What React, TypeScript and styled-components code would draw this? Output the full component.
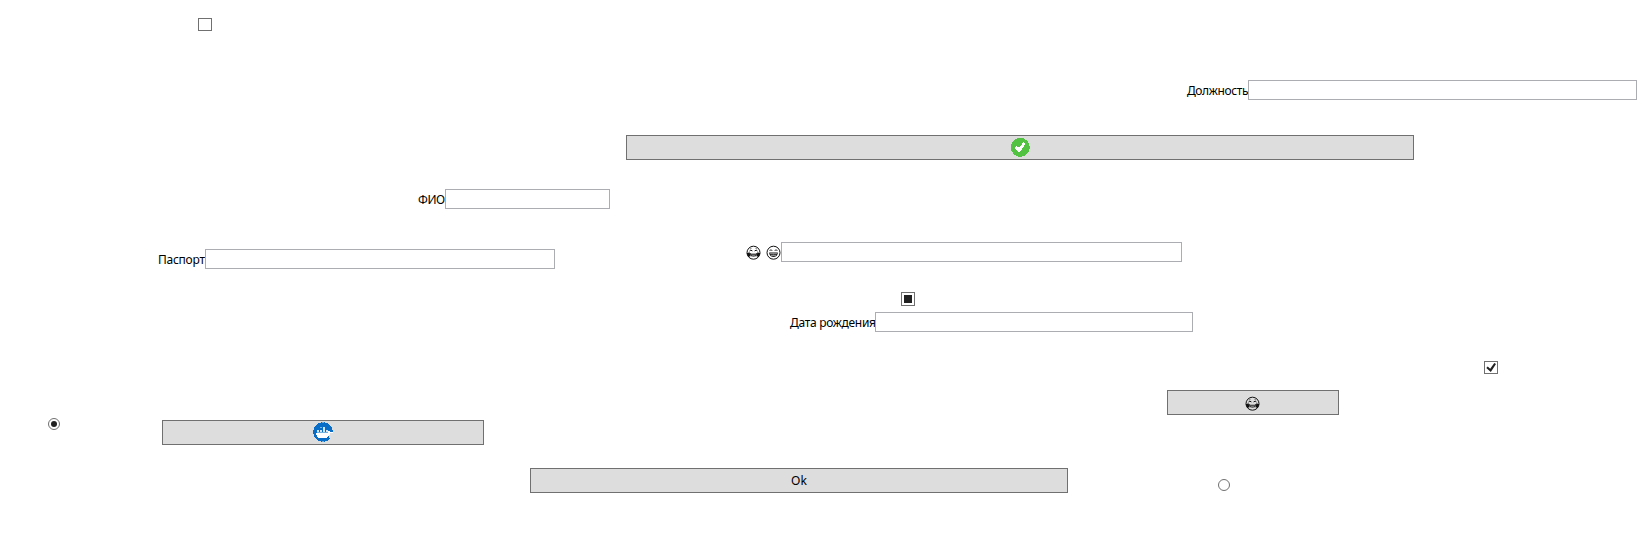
import React from "react";
import styled, { createGlobalStyle } from "styled-components";

const GlobalStyle = createGlobalStyle`
  * { box-sizing: border-box; }
  body { margin: 0; background: #fff; overflow: hidden; }
`;

const Canvas = styled.main`
  position: relative;
  width: 1640px;
  height: 542px;
  background: #fff;
  color: #000;
  font: 12px/16px "Noto Sans", "Open Sans", sans-serif;
`;

// Controls are freely placed on the form canvas.
const Placed = styled.div<{ $x: number; $y: number }>`
  position: absolute;
  left: ${(p) => p.$x}px;
  top: ${(p) => p.$y}px;
  display: flex;
`;

const Field = styled.label`
  display: flex;
  align-items: flex-start;
`;

const Caption = styled.span<{ $width: number; $spacing?: number }>`
  display: flex;
  justify-content: space-between;
  width: ${(p) => p.$width}px;
  padding-top: 3px;
  white-space: nowrap;
  letter-spacing: ${(p) => p.$spacing ?? 0}px;
`;

const TextBox = styled.input<{ $width: number }>`
  width: ${(p) => p.$width}px;
  height: 20px;
  margin: 0;
  padding: 0 3px;
  border: 1px solid #abadb3;
  border-radius: 0;
  background: #fff;
  font: inherit;
  outline: none;
`;

const Button = styled.button<{ $width: number; $padding?: string }>`
  display: flex;
  align-items: center;
  justify-content: center;
  width: ${(p) => p.$width}px;
  height: 25px;
  padding: ${(p) => p.$padding ?? "0"};
  border: 1px solid #707070;
  border-radius: 0;
  background: #ddd;
  color: #000;
  font: inherit;
`;

const CheckBox = styled.span<{ $height: number }>`
  display: flex;
  align-items: center;
  justify-content: center;
  width: 14px;
  height: ${(p) => p.$height}px;
  border: 1px solid #707070;
  background: #fff;
`;

const Indeterminate = styled.span`
  width: 8px;
  height: 8px;
  background: #212121;
`;

const Radio = styled.span`
  display: flex;
  align-items: center;
  justify-content: center;
  width: 12px;
  height: 12px;
  border: 1px solid #707070;
  border-radius: 50%;
  background: #fff;
`;

const RadioDot = styled.span`
  width: 6px;
  height: 6px;
  border-radius: 50%;
  background: #212121;
`;

const Icon = styled.svg`
  display: block;
  flex: none;
`;

const LaughIcon = () => (
  <Icon width="15" height="15" viewBox="0 0 15 15" fill="none" stroke="#111">
    <circle cx="7.5" cy="7.7" r="6.5" />
    <path d="M4 3.9 5.6 3.3M11 3.9 9.4 3.3" strokeWidth=".7" stroke="#555" />
    <path d="M3.6 6.3 4.6 5.1l1.8.8M8.6 5.9l1.8-.8 1 1.2" strokeWidth="1" />
    <path d="M.7 8.2 3.6 7.2 4.6 11.2 2.2 12ZM14.3 8.2 11.4 7.2 10.4 11.2 12.8 12Z" fill="#111" stroke="none" />
    <path d="M3.6 8h7.8c-.1 2.4-1.6 3.7-3.9 3.7S3.7 10.4 3.6 8Z" fill="#333" stroke="none" />
    <path d="M4.8 8.7h5.4" stroke="#ddd" strokeWidth=".9" />
    <path d="M5.2 11.6c.9-1.2 3.7-1.2 4.6 0" stroke="#aaa" strokeWidth=".9" />
  </Icon>
);

const GrinIcon = () => (
  <Icon width="15" height="15" viewBox="0 0 15 15" fill="none" stroke="#111">
    <circle cx="7.5" cy="7.7" r="6.5" />
    <path d="M3.8 5.8c.4-1.4 1.8-1.4 2.3 0M8.9 5.8c.4-1.4 1.8-1.4 2.3 0" strokeWidth=".9" />
    <path d="M3.2 7.4h8.6c0 2.9-1.8 4.6-4.3 4.6s-4.3-1.7-4.3-4.6Z" fill="#111" stroke="none" />
    <path d="M4 8.7h7M5 10.6h5" stroke="#ccc" strokeWidth=".7" />
    <path d="M6 8v3M7.5 8v3M9 8v3" stroke="#aaa" strokeWidth=".4" />
  </Icon>
);

const SuccessIcon = () => (
  <Icon width="20" height="20" viewBox="0 0 20 20" shapeRendering="crispEdges">
    <circle cx="10.3" cy="10.3" r="9.5" fill="#52c242" />
    <path d="m4.6 10.8 2-1.9 2.4 2L13.4 5l2.3 1.7-5.9 8.2H8.4Z" fill="#fff" />
  </Icon>
);

const DockerIcon = () => (
  <Icon width="20" height="20" viewBox="0 0 20 20" shapeRendering="crispEdges">
    <circle cx="10" cy="10" r="9.8" fill="#086dc7" />
    <path d="M17 11h3v5h-4Z" fill="#ddd" />
    <path d="M3 10.5h12l.8-2 1.4 1.5H20v1.2h-2.4l-2.2 3c-1.2 1.6-3.2 2.3-6.2 2.3-3.7 0-6-1.6-6.2-6Z" fill="#fff" />
    <path d="M4 7.6h2v2H4ZM7 7.6h2v2H7ZM9.5 5h2v4.6h-2ZM12.5 7.6h2v2h-2Z" fill="#d2e5f5" />
    <path d="M4 9.5h10.5v1H4ZM7 5h2v1H7Z" fill="#74b3df" />
    <path d="M9 0h2v1H9ZM9 19h2v1H9Z" fill="#74b3df" />
  </Icon>
);

const CheckMark = () => (
  <Icon width="12" height="11" viewBox="0 0 12 11">
    <path d="m1.3 5.9 1.4-1.5 2.5 2.3L9.3 1l1.7 1.1-5.2 8Z" fill="#212121" />
  </Icon>
);

const fields = [
  { label: "Должность", x: 1187, y: 80, caption: 61, width: 389, spacing: -0.38 },
  { label: "ФИО", x: 418, y: 189, caption: 27, width: 165, spacing: -0.4 },
  { label: "Паспорт", x: 158, y: 249, caption: 47, width: 350, spacing: -0.26 },
  { label: "Дата рождения", x: 790, y: 312, caption: 85, width: 318, spacing: -0.3 },
];

export default function App() {
  return (
    <>
      <GlobalStyle />
      <Canvas>
        <Placed $x={198} $y={18}><CheckBox $height={13} /></Placed>
        {fields.map((f) => (
          <Placed key={f.label} $x={f.x} $y={f.y}>
            <Field>
              <Caption $width={f.caption} $spacing={f.spacing}>{f.label}</Caption>
              <TextBox $width={f.width} />
            </Field>
          </Placed>
        ))}
        <Placed $x={626} $y={135}><Button $width={788} $padding="0 0 1px"><SuccessIcon /></Button></Placed>
        <Placed $x={746} $y={242}>
          <Field>
            <Caption $width={35}><LaughIcon /><GrinIcon /></Caption>
            <TextBox $width={401} />
          </Field>
        </Placed>
        <Placed $x={901} $y={292}><CheckBox $height={14}><Indeterminate /></CheckBox></Placed>
        <Placed $x={1484} $y={361}><CheckBox $height={13}><CheckMark /></CheckBox></Placed>
        <Placed $x={1167} $y={390}><Button $width={172} $padding="2px 1px 0 0"><LaughIcon /></Button></Placed>
        <Placed $x={48} $y={418}><Radio><RadioDot /></Radio></Placed>
        <Placed $x={162} $y={420}><Button $width={322} $padding="0 0 1px"><DockerIcon /></Button></Placed>
        <Placed $x={530} $y={468}><Button $width={538}>Ok</Button></Placed>
        <Placed $x={1218} $y={479}><Radio /></Placed>
      </Canvas>
    </>
  );
}
